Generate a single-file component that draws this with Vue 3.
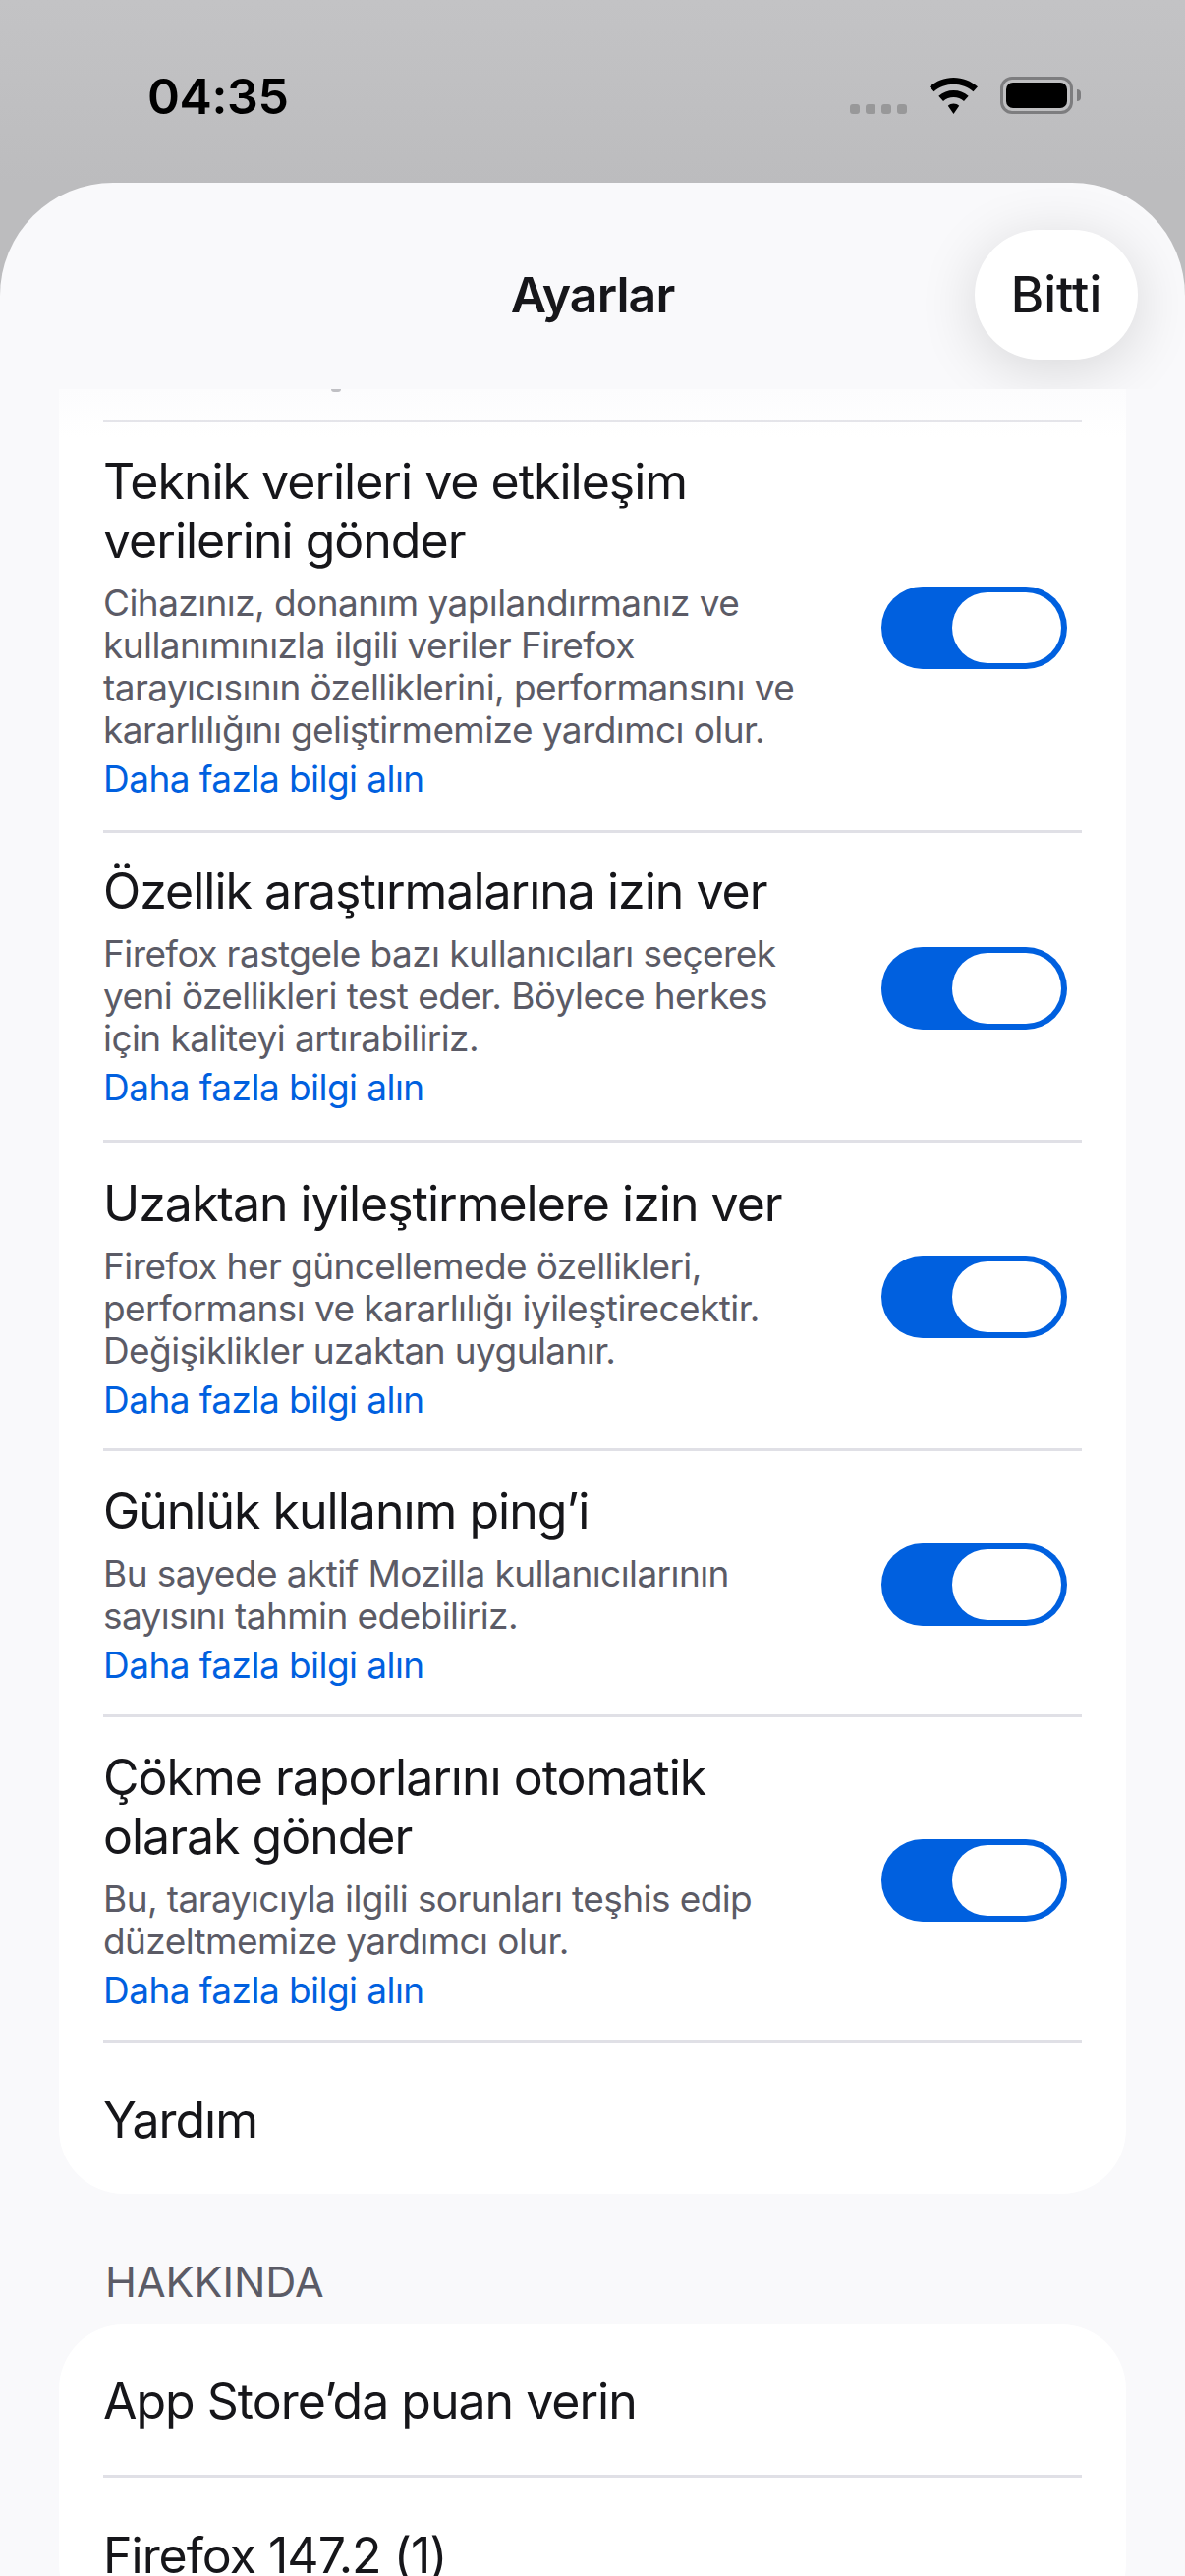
<template>
  <div class="screen">
    <div class="status-bar">
      <span class="time">04:35</span>
      <div class="status-icons">
        <div class="signal">
          <i v-for="n in 4" :key="n"></i>
        </div>
        <svg class="wifi" width="51" height="37" viewBox="0 0 50 37">
          <path d="M25 0C15.500 0 7.200 3.500 0.500 9.300L5 14.300C10.500 9.600 17.500 6.800 25 6.800C32.500 6.800 39.500 9.600 45 14.300L49.500 9.300C42.800 3.500 34.500 0 25 0Z" />
          <path d="M25 13C19.300 13 14.300 15 9.800 18.800L14.500 23.900C17.300 21.400 21 20 25 20C29 20 32.700 21.400 35.500 23.900L40.200 18.800C35.700 15 30.700 13 25 13Z" />
          <path d="M25 26.500C22.700 26.500 20.800 27.300 19.300 28.700L25 37L30.700 28.700C29.200 27.300 27.300 26.500 25 26.500Z" />
        </svg>
        <div class="battery">
          <div class="battery-body"><div class="battery-fill"></div></div>
          <div class="battery-cap"></div>
        </div>
      </div>
    </div>

    <div class="sheet">
      <header class="nav">
        <h1 class="nav-title">Ayarlar</h1>
        <button class="done-btn">Bitti</button>
      </header>

      <div class="scroll">
        <section class="card first-card">
          <div class="clipped-row"><span class="clip-mark"></span></div>
          <div v-for="item in toggles" :key="item.title" class="row toggle-row" :style="{ height: item.height + 'px' }">
            <div class="row-text" :style="{ paddingTop: item.top + 'px' }">
              <div class="row-title">{{ item.title }}</div>
              <div class="row-desc">{{ item.desc }}</div>
              <a class="row-link">Daha fazla bilgi alın</a>
            </div>
            <div class="switch"><div class="knob"></div></div>
          </div>
          <div class="row plain-row last">
            <div class="row-title">Yardım</div>
          </div>
        </section>

        <div class="section-label">HAKKINDA</div>

        <section class="card">
          <div class="row plain-row about-row">
            <div class="row-title">App Store’da puan verin</div>
          </div>
          <div class="row plain-row last">
            <div class="row-title">Firefox 147.2 (1)</div>
          </div>
        </section>
      </div>
    </div>
  </div>
</template>

<script setup>
const toggles = [
  {
    title: 'Teknik verileri ve etkileşim verilerini gönder',
    desc: 'Cihazınız, donanım yapılandırmanız ve kullanımınızla ilgili veriler Firefox tarayıcısının özelliklerini, performansını ve kararlılığını geliştirmemize yardımcı olur.',
    height: 418,
    top: 30,
  },
  {
    title: 'Özellik araştırmalarına izin ver',
    desc: 'Firefox rastgele bazı kullanıcıları seçerek yeni özellikleri test eder. Böylece herkes için kaliteyi artırabiliriz.',
    height: 315,
    top: 29,
  },
  {
    title: 'Uzaktan iyileştirmelere izin ver',
    desc: 'Firefox her güncellemede özellikleri, performansı ve kararlılığı iyileştirecektir. Değişiklikler uzaktan uygulanır.',
    height: 314,
    top: 32,
  },
  {
    title: 'Günlük kullanım ping’i',
    desc: 'Bu sayede aktif Mozilla kullanıcılarının sayısını tahmin edebiliriz.',
    height: 271,
    top: 31,
  },
  {
    title: 'Çökme raporlarını otomatik olarak gönder',
    desc: 'Bu, tarayıcıyla ilgili sorunları teşhis edip düzeltmemize yardımcı olur.',
    height: 331,
    top: 31,
  },
]
</script>

<style>
html,
body {
  margin: 0;
  padding: 0;
  background: #c2c2c4;
}
</style>

<style scoped>
.screen {
  width: 1206px;
  height: 2622px;
  overflow: hidden;
  display: flex;
  flex-direction: column;
  background: linear-gradient(#c3c3c5, #bcbcbe 186px);
  font-family: Inter, "Liberation Sans", sans-serif;
  color: #16161a;
}

.status-bar {
  height: 186px;
  flex: none;
  display: flex;
  justify-content: space-between;
  align-items: flex-start;
  padding: 0 106px 0 150px;
  box-sizing: border-box;
}

.time {
  margin-top: 68px;
  font-size: 50px;
  line-height: 60px;
  font-weight: 600;
  letter-spacing: -0.4px;
  color: #000;
}

.status-icons {
  display: flex;
  align-items: flex-start;
  margin-top: 78px;
}

.signal {
  display: flex;
  gap: 6px;
  margin: 28px 22px 0 0;
}

.signal i {
  width: 10px;
  height: 10px;
  border-radius: 3px;
  background: #989899;
}

.wifi {
  fill: #000;
  margin: 1px 22px 0 0;
}

.battery {
  display: flex;
  align-items: center;
}

.battery-body {
  width: 74px;
  height: 38px;
  box-sizing: border-box;
  border: 3px solid #7d7d7f;
  border-radius: 12px;
  padding: 3px;
}

.battery-fill {
  height: 100%;
  border-radius: 7px;
  background: #000;
}

.battery-cap {
  width: 4px;
  height: 12px;
  margin-left: 4px;
  border-radius: 0 4px 4px 0;
  background: #7d7d7f;
}

.sheet {
  flex: 1;
  min-height: 0;
  display: flex;
  flex-direction: column;
  background: #f9f9fb;
  border-radius: 115px 115px 0 0;
}

.nav {
  position: relative;
  z-index: 2;
  height: 210px;
  flex: none;
  box-sizing: border-box;
  padding-top: 18px;
  display: flex;
  align-items: center;
  justify-content: center;
  overflow: hidden;
  border-radius: 115px 115px 0 0;
}

.nav-title {
  margin: 0;
  font-size: 50px;
  font-weight: 600;
  line-height: 60px;
  letter-spacing: -0.9px;
}

.done-btn {
  position: absolute;
  top: 48px;
  right: 48px;
  width: 166px;
  height: 132px;
  border: none;
  padding: 0;
  border-radius: 66px;
  background: #fff;
  box-shadow: 0 10px 60px rgba(0, 0, 0, 0.14);
  font: 500 51px/60px Inter, "Liberation Sans", sans-serif;
  color: #16161a;
}

.scroll {
  position: relative;
  flex: 1;
  min-height: 0;
  overflow: hidden;
  padding: 0 60px;
}

/* soft fade under the nav bar */
.scroll::before {
  content: "";
  position: absolute;
  top: 0;
  left: 0;
  right: 0;
  height: 50px;
  background: linear-gradient(rgba(249, 249, 251, 0.5), rgba(249, 249, 251, 0));
  pointer-events: none;
}

.card {
  background: #fff;
  border-radius: 66px;
}

.first-card {
  border-radius: 0 0 66px 66px;
}

.clipped-row {
  position: relative;
  height: 31px;
}

.clip-mark {
  position: absolute;
  top: 0;
  left: 277px;
  width: 10px;
  height: 3px;
  border-radius: 0 0 5px 5px;
  background: #c0c0c4;
}

.row {
  margin-left: 45px;
  margin-right: 45px;
  border-top: 3px solid #e0e0e6;
  box-sizing: border-box;
}

.toggle-row {
  display: flex;
  align-items: flex-start;
  justify-content: space-between;
}

.row-text {
  width: 720px;
}

.row-title {
  font-size: 50px;
  line-height: 60px;
  letter-spacing: -1px;
}

.row-desc {
  margin-top: 12px;
  font-size: 37px;
  line-height: 43px;
  letter-spacing: -0.58px;
  color: #5b5b66;
}

.row-link {
  display: block;
  margin-top: 6px;
  font-size: 37px;
  line-height: 46px;
  letter-spacing: -0.55px;
  color: #0060df;
}

.switch {
  width: 189px;
  height: 84px;
  flex: none;
  align-self: center;
  margin: 3px 15px 0 0;
  box-sizing: border-box;
  padding: 6px;
  border-radius: 42px;
  background: #0060df;
  display: flex;
  justify-content: flex-end;
}

.knob {
  width: 111px;
  height: 72px;
  border-radius: 36px;
  background: #fff;
}

.plain-row {
  display: flex;
  align-items: center;
  height: 157px;
  padding-top: 3px;
}

.about-row {
  border-top: none;
  height: 153px;
}

.section-label {
  margin: 64px 0 0;
  padding: 0 47px;
  height: 69px;
  font-size: 43px;
  line-height: 50px;
  color: #5b5b66;
}
</style>
